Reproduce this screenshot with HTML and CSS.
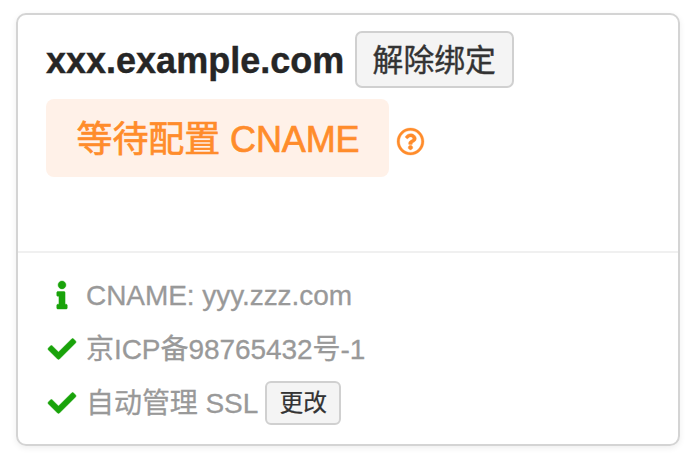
FILE: index.html
```html
<!DOCTYPE html>
<html lang="zh-CN">
<head>
<meta charset="utf-8">
<title>xxx.example.com</title>
<link rel="stylesheet" href="styles.css">
</head>
<body>
<main class="card">
  <header class="card-head">
    <div class="title-row">
      <h1 class="domain">xxx.example.com</h1>
      <button class="btn btn-large" type="button"><span>解除绑定</span></button>
    </div>
    <div class="status-row">
      <span class="status">等待配置 CNAME</span>
      <svg class="help" viewBox="8 8 496 496"><path d="M256 8C119.043 8 8 119.083 8 256c0 136.997 111.043 248 248 248s248-111.003 248-248C504 119.083 392.957 8 256 8zm0 448c-110.532 0-200-89.431-200-200 0-110.495 89.472-200 200-200 110.491 0 200 89.471 200 200 0 110.53-89.431 200-200 200zm107.244-255.200c0 67.052-72.421 68.084-72.421 92.863V300c0 6.627-5.373 12-12 12h-45.647c-6.627 0-12-5.373-12-12v-8.659c0-35.745 27.100-50.034 47.579-61.516 17.561-9.845 28.324-16.541 28.324-29.579 0-17.246-21.999-28.693-39.784-28.693-23.189 0-33.894 10.977-48.942 29.969-4.057 5.120-11.460 6.071-16.666 2.124l-27.824-21.098c-5.107-3.872-6.251-11.066-2.644-16.363C184.846 131.491 214.940 112 261.794 112c49.071 0 101.450 38.304 101.450 88.800zM298 368c0 23.159-18.841 42-42 42s-42-18.841-42-42 18.841-42 42-42 42 18.841 42 42z"/></svg>
    </div>
  </header>
  <ul class="info">
    <li class="info-row">
      <svg class="icon" viewBox="-160 0 512 512"><path d="M20 424.229h20V279.771H20c-11.046 0-20-8.954-20-20V212c0-11.046 8.954-20 20-20h112c11.046 0 20 8.954 20 20v212.229h20c11.046 0 20 8.954 20 20V492c0 11.046-8.954 20-20 20H20c-11.046 0-20-8.954-20-20v-47.771c0-11.046 8.954-20 20-20zM96 0C56.235 0 24 32.235 24 72s32.235 72 72 72 72-32.235 72-72S135.764 0 96 0z"/></svg>
      <span class="info-text">CNAME: yyy.zzz.com</span>
    </li>
    <li class="info-row">
      <svg class="icon" viewBox="0 0 512 512"><path d="M173.898 439.404l-166.400-166.400c-9.997-9.997-9.997-26.206 0-36.204l36.203-36.204c9.997-9.998 26.207-9.998 36.204 0L192 312.690 432.095 72.596c9.997-9.997 26.207-9.997 36.204 0l36.203 36.204c9.997 9.997 9.997 26.206 0 36.204l-294.400 294.401c-9.998 9.997-26.207 9.997-36.204-.001z"/></svg>
      <span class="info-text">京ICP备98765432号-1</span>
    </li>
    <li class="info-row">
      <svg class="icon" viewBox="0 0 512 512"><path d="M173.898 439.404l-166.400-166.400c-9.997-9.997-9.997-26.206 0-36.204l36.203-36.204c9.997-9.998 26.207-9.998 36.204 0L192 312.690 432.095 72.596c9.997-9.997 26.207-9.997 36.204 0l36.203 36.204c9.997 9.997 9.997 26.206 0 36.204l-294.400 294.401c-9.998 9.997-26.207 9.997-36.204-.001z"/></svg>
      <span class="info-text">自动管理 SSL</span>
      <button class="btn btn-small" type="button"><span>更改</span></button>
    </li>
  </ul>
</main>
</body>
</html>
```
FILE: styles.css
```css
* {
  box-sizing: border-box;
}

body {
  margin: 0;
  padding: 13px 14px 22px 16px;
  background: #fff;
  font-family: "Liberation Sans", "Noto Sans CJK SC", sans-serif;
}

.card {
  height: 433px;
  border: 2px solid #d4d4d4;
  border-radius: 10px;
  box-shadow: 0 2px 6px rgba(0, 0, 0, 0.07);
}

.card-head {
  height: 238px;
  padding: 16px 28px 0;
  border-bottom: 2px solid #f0f0f0;
}

.title-row {
  display: flex;
  align-items: center;
  gap: 11px;
  height: 57px;
}

.domain {
  margin: 2px 0 0;
  color: #262626;
  font-size: 36px;
  line-height: 56px;
  -webkit-text-stroke: 0.4px currentColor;
}

.btn {
  display: flex;
  align-items: center;
  justify-content: center;
  padding: 0;
  border: 2px solid #d0d0d0;
  background: #f4f4f4;
  color: #333;
  font-family: inherit;
  white-space: nowrap;
  -webkit-text-stroke: 0.4px currentColor;
}

.btn-large {
  width: 159px;
  height: 57px;
  padding: 1px 1px 0 0;
  border-radius: 7px;
  font-size: 30.8px;
  line-height: 53px;
}

.btn-small {
  width: 76px;
  height: 44px;
  margin: -2px 0 0 7px;
  border-radius: 6px;
  font-size: 23.8px;
  line-height: 40px;
  -webkit-text-stroke-width: 0.2px;
}

.status-row {
  display: flex;
  align-items: center;
  gap: 7.500px;
  margin-top: 11px;
}

.status {
  width: 343px;
  height: 78px;
  padding: 2px 0 0 30.500px;
  border-radius: 8px;
  background: #fff1e8;
  color: #ff8c2b;
  font-size: 36px;
  line-height: 78px;
  letter-spacing: -0.1px;
  white-space: nowrap;
  -webkit-text-stroke: 0.7px currentColor;
}

.help {
  width: 27px;
  height: 27px;
  margin-top: 7px;
  fill: #ff8c2b;
  stroke: #ff8c2b;
  stroke-width: 6px;
  overflow: visible;
}

.info {
  margin: 0;
  padding: 16px 28px 0;
  list-style: none;
}

.info-row {
  display: flex;
  align-items: center;
  height: 54px;
  color: #999;
  font-size: 28px;
  line-height: 54px;
  white-space: nowrap;
}

.info-text {
  letter-spacing: -0.060px;
  -webkit-text-stroke: 0.3px currentColor;
}

.icon {
  flex: none;
  width: 28px;
  height: 28px;
  margin: -2px 10px 0 2px;
  fill: #19a30a;
  stroke: #19a30a;
  stroke-width: 8px;
  overflow: visible;
}
```
